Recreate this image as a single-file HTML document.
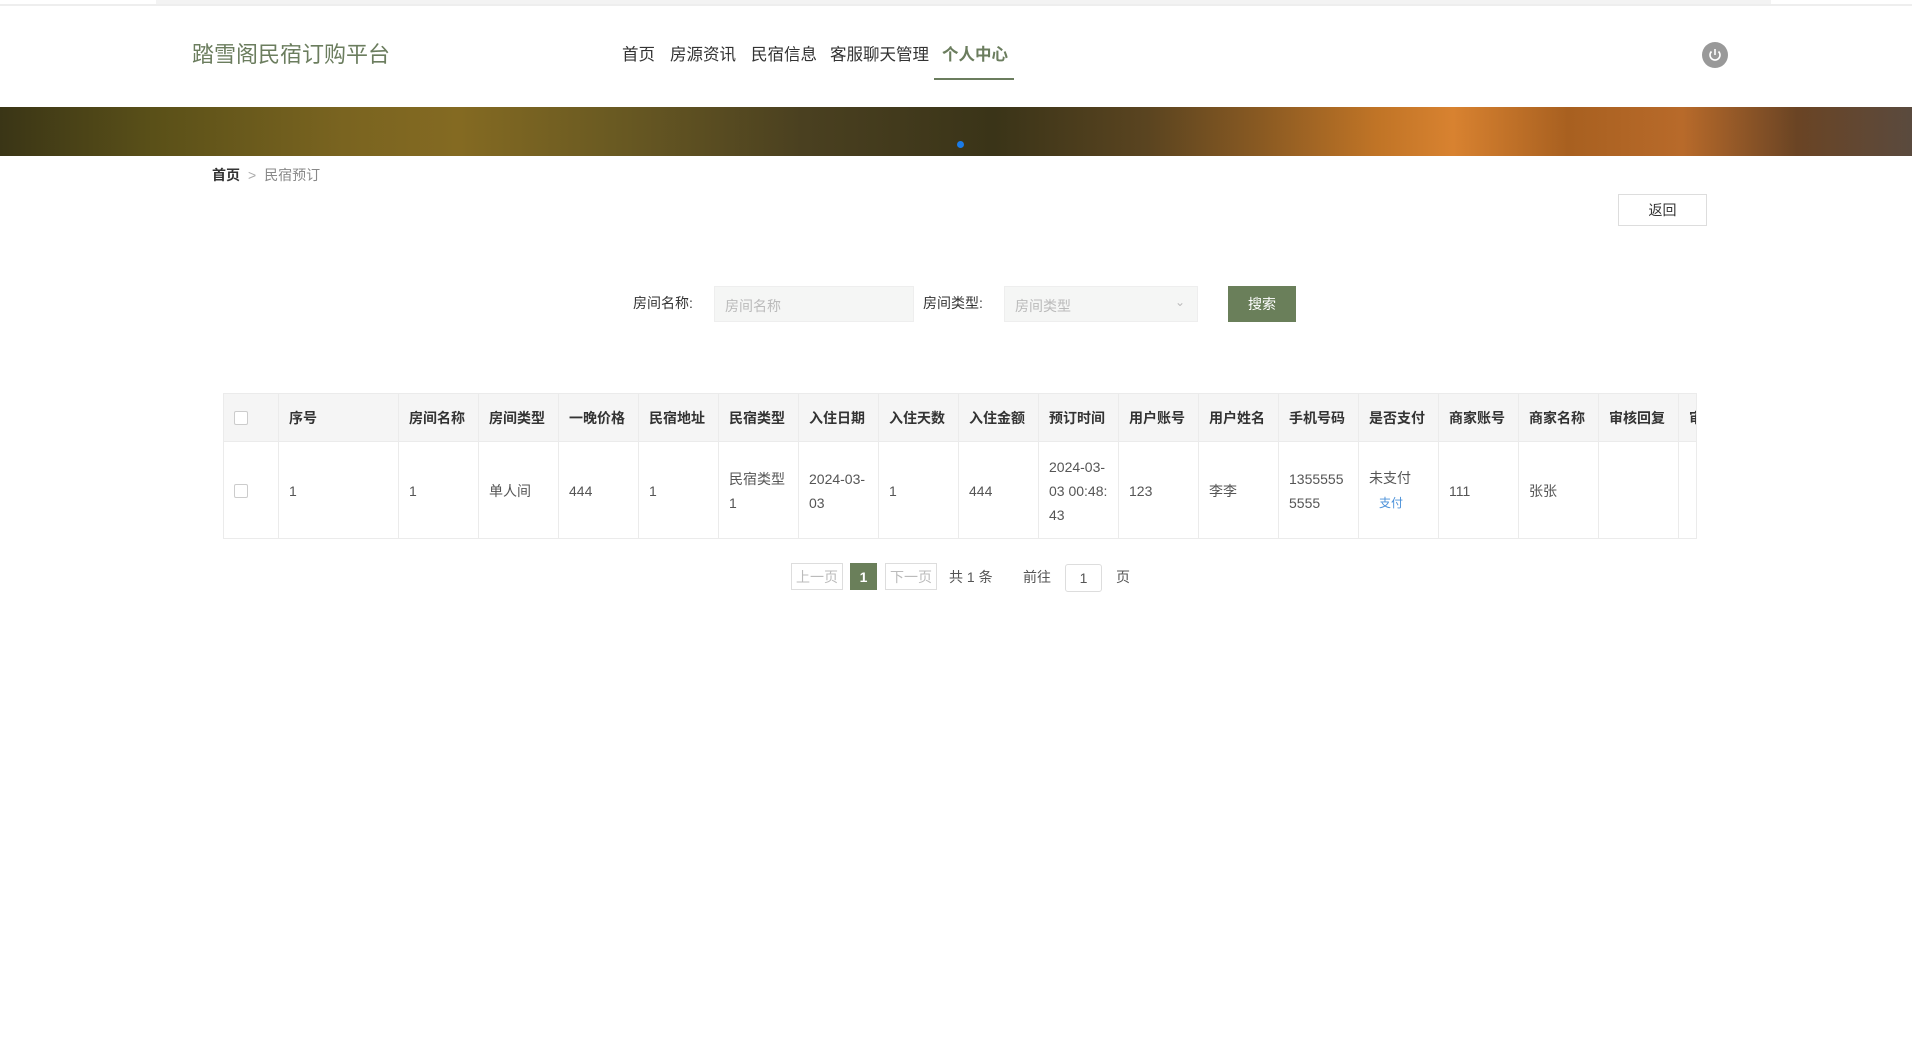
<!DOCTYPE html>
<html><head><meta charset="utf-8"><style>
*{margin:0;padding:0;box-sizing:border-box}
body{width:1912px;height:1050px;background:#fff;font-family:"Liberation Sans","Noto Sans CJK SC",sans-serif;color:#333;position:relative;overflow:hidden}
.abs{position:absolute;white-space:nowrap}
.topbar{left:0;top:0;width:1912px;height:6px;background:#fff;border-bottom:2px solid #eee}
.topbar2{left:156px;top:0;width:1615px;height:4px;background:#f3f3f3}
.logo{left:192px;top:40px;font-size:22px;color:#6b7d5e;line-height:30px}
.nav{top:44px;font-size:16.5px;color:#333;line-height:22px}
.banner{left:0;top:107px;width:1912px;height:49px;background:linear-gradient(90deg,#3a3516 0%,#5a5018 8%,#7a6420 18%,#846a22 24%,#6a5a22 32%,#4a4020 42%,#3a3418 52%,#5a4420 60%,#8a5a22 66%,#c07426 72%,#d88230 76%,#a86020 82%,#b86a2a 88%,#6a4424 94%,#5a4a3e 100%)}
.cell{position:absolute;border-right:1px solid #ebebeb;padding-left:10px;display:flex;align-items:center;font-size:14px;color:#555;line-height:24px;white-space:normal}
.cb{width:14px;height:14px;border:1px solid #ccc;border-radius:2px;background:#fff}
.pg{top:563px;height:27px;border:1px solid #ddd;font-size:14px;color:#bbb;display:flex;align-items:center;justify-content:center}
</style></head><body>
<div class="abs topbar"></div><div class="abs topbar2"></div>
<div class="abs logo">踏雪阁民宿订购平台</div>
<div class="abs nav" style="left:622px">首页</div>
<div class="abs nav" style="left:670px">房源资讯</div>
<div class="abs nav" style="left:751px">民宿信息</div>
<div class="abs nav" style="left:830px">客服聊天管理</div>
<div class="abs nav" style="left:942px;color:#6b7d5e;font-weight:600">个人中心</div>
<div class="abs" style="left:934px;top:78px;width:80px;height:2px;background:#6b7d5e"></div>
<div class="abs" style="left:1702px;top:42px;width:26px;height:26px;border-radius:50%;background:#999"></div>
<svg class="abs" style="left:1705px;top:45px" width="20" height="20" viewBox="0 0 20 20"><path d="M6.5 6.5a5 5 0 1 0 7 0" fill="none" stroke="#fff" stroke-width="1.6"/><path d="M10 4v6" stroke="#fff" stroke-width="1.6"/></svg>
<div class="abs banner"></div>
<div class="abs" style="left:957px;top:141px;width:7px;height:7px;border-radius:50%;background:#1a7be8"></div>
<div class="abs" style="left:212px;top:166px;font-size:14px;line-height:18px"><b style="color:#333">首页</b><span style="color:#aaa;margin:0 8px">&gt;</span><span style="color:#888">民宿预订</span></div>
<div class="abs" style="left:1618px;top:194px;width:89px;height:32px;border:1px solid #ddd;font-size:14px;color:#333;display:flex;align-items:center;justify-content:center">返回</div>
<div class="abs" style="left:633px;top:294px;font-size:14px;line-height:18px">房间名称:</div>
<div class="abs" style="left:714px;top:286px;width:200px;height:36px;background:#f5f6f5;border:1px solid #eee;font-size:14px;color:#bbb;padding:9px 10px">房间名称</div>
<div class="abs" style="left:923px;top:294px;font-size:14px;line-height:18px">房间类型:</div>
<div class="abs" style="left:1004px;top:286px;width:194px;height:36px;background:#f5f6f5;border:1px solid #eee;font-size:14px;color:#bbb;padding:9px 10px">房间类型<span style="position:absolute;right:12px;top:8px;color:#bbb;font-size:12px">&#8964;</span></div>
<div class="abs" style="left:1228px;top:286px;width:68px;height:36px;background:#6a7f5a;color:#fff;font-size:14px;display:flex;align-items:center;justify-content:center">搜索</div>
<div class="abs" style="left:223px;top:393px;width:1474px;height:146px;border:1px solid #ebebeb;overflow:hidden">
<div class="abs" style="left:0;top:0;width:1480px;height:48px;border-bottom:1px solid #ebebeb;background:#f5f5f5"></div>
<div id="t"></div>
</div>
<div class="abs pg" style="left:791px;width:52px">上一页</div>
<div class="abs pg" style="left:850px;width:27px;background:#6a7f5a;border-color:#6a7f5a;color:#fff;font-weight:bold">1</div>
<div class="abs pg" style="left:885px;width:52px">下一页</div>
<div class="abs" style="left:949px;top:567px;font-size:14px;color:#555">共 1 条</div>
<div class="abs" style="left:1023px;top:567px;font-size:14px;color:#555">前往</div>
<div class="abs" style="left:1065px;top:564px;width:37px;height:28px;border:1px solid #ddd;border-radius:3px;font-size:14px;color:#555;display:flex;align-items:center;justify-content:center">1</div>
<div class="abs" style="left:1116px;top:567px;font-size:14px;color:#555">页</div>
<script>
var hs=["","序号","房间名称","房间类型","一晚价格","民宿地址","民宿类型","入住日期","入住天数","入住金额","预订时间","用户账号","用户姓名","手机号码","是否支付","商家账号","商家名称","审核回复","审核状态"];
var rs=["","1","1","单人间","444","1","民宿类型<br>1","2024-03-<br>03","1","444","2024-03-<br>03 00:48:<br>43","123","李李","1355555<br>5555",'未支付<br><span style="color:#4a90d9;font-size:12px;padding-left:10px">支付</span>',"111","张张","",""];
var h="",x=0;
for(var i=0;i<hs.length;i++){var w=i==0?55:(i==1?120:80);
var c0=i==0?'<div class="cb"></div>':hs[i];var c1=i==0?'<div class="cb"></div>':rs[i];
h+='<div class="cell" style="left:'+x+'px;top:0;width:'+w+'px;height:48px;font-weight:bold;color:#333;white-space:nowrap">'+c0+'</div>';
h+='<div class="cell" style="left:'+x+'px;top:48px;width:'+w+'px;height:97px">'+'<div>'+c1+'</div></div>';x+=w;}
document.getElementById("t").innerHTML=h;
</script>
</body></html>
